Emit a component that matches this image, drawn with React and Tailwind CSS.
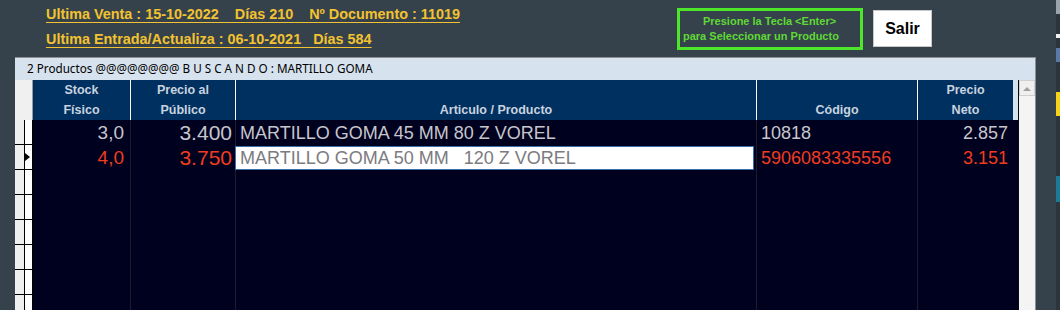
export default function App() {
  const cols = "grid grid-cols-[18px_97px_105px_521px_161px_96px]";
  const emptyRows = Array.from({ length: 6 });

  return (
    <div className="relative h-[310px] w-[1060px] overflow-hidden bg-[#36424b] font-['Liberation_Sans',Arial,sans-serif]">
      {/* pieces of the window behind, at the right edge */}
      <div className="absolute right-0 top-0 flex h-full w-[4px] flex-col bg-[#2c353c]">
        <div className="h-[14px] bg-[#9aa4ac]" />
        <div className="mt-[20px] h-[4px] bg-[#f0f0f0]" />
        <div className="mt-[10px] h-[14px] bg-[#5a78a8]" />
        <div className="mt-[30px] h-[24px] bg-[#f7d21a]" />
        <div className="mt-[60px] h-[26px] bg-[#1d7a96]" />
      </div>

      <div className="flex h-[57px] pr-[128px]">
        <div className="flex-1 pl-[46px] pt-[4px] text-[14.4px] font-bold leading-[20px] text-[#f2c230]">
          <div>
            <span className="underline underline-offset-[3px]">
              Ultima Venta : 15-10-2022&nbsp;&nbsp;&nbsp; Días 210&nbsp;&nbsp;&nbsp; Nº Documento : 11019
            </span>
          </div>
          <div className="mt-[5px]">
            <span className="underline underline-offset-[3px]">
              Ultima Entrada/Actualiza : 06-10-2021&nbsp;&nbsp; Días 584
            </span>
          </div>
        </div>
        <div className="mt-[8px] flex h-[42px] w-[186px] flex-col justify-center border-[3px] border-[#4ee62a] pl-[3px] text-[11px] font-bold leading-[15px] text-[#5ed935]">
          <div className="pl-[20px]">Presione la Tecla &lt;Enter&gt;</div>
          <div>para Seleccionar un Producto</div>
        </div>
        <button className="ml-[10px] mt-[10px] h-[37px] w-[59px] border border-[#c8c8c8] bg-white text-[16px] font-bold text-black">
          Salir
        </button>
      </div>

      <div className="ml-[15px] flex h-[253px] w-[1021px] flex-col border-t border-r border-[#8a9096]">
        <div className="flex h-[22px] items-center bg-[#d6e2ee] pl-[12px] text-[11.7px] text-black font-['Noto_Sans',sans-serif]">
          2 Productos @@@@@@@@ B U S C A N D O : MARTILLO GOMA
        </div>
        <div className="flex flex-1 overflow-hidden">
          <div className="flex w-[1003px] flex-col bg-[#0a0a10]">
            <div className={`${cols} h-[41px] bg-[#d6e2ee] text-[12.5px] font-bold leading-[20px] text-[#c9d3df]`}>
              <div className="h-full border-r border-[#9a9a9a] bg-[#f0f0f0]" />
              <div className="flex flex-col items-center justify-center bg-[#00305f]">
                <span>Stock</span>
                <span>Físico</span>
              </div>
              <div className="flex flex-col items-center justify-center border-l border-white bg-[#00305f]">
                <span>Precio al</span>
                <span>Público</span>
              </div>
              <div className="flex items-end justify-center border-l border-white bg-[#00305f]">
                <span>Articulo / Producto</span>
              </div>
              <div className="flex items-end justify-center border-l border-white bg-[#00305f]">
                <span>Código</span>
              </div>
              <div className="flex flex-col items-center justify-center border-l border-white bg-[#00305f]">
                <span>Precio</span>
                <span>Neto</span>
              </div>
            </div>

            <Row
              cols={cols}
              stock="3,0"
              precio="3.400"
              articulo="MARTILLO GOMA 45 MM 80 Z VOREL"
              codigo="10818"
              neto="2.857"
              text="text-[#c6c6cc]"
            />
            <Row
              cols={cols}
              current
              stock="4,0"
              precio="3.750"
              articulo="MARTILLO GOMA 50 MM   120 Z VOREL"
              codigo="5906083335556"
              neto="3.151"
              text="text-[#f23c1e]"
            />
            {emptyRows.map((_, i) => (
              <Row key={i} cols={cols} />
            ))}
          </div>

          <div className="flex w-[17px] flex-col border-l border-[#0a0a0a] bg-[#f4f4f4]">
            <div className="flex h-[16px] items-center justify-center border border-[#d0d0d0] bg-[#f0f0f0]">
              <svg width="8" height="5" viewBox="0 0 8 5">
                <path d="M0 5 L4 1 L8 5 Z" fill="#a0a0a0" />
              </svg>
            </div>
          </div>
        </div>
      </div>
    </div>
  );
}

function Row({ cols, current, stock, precio, articulo, codigo, neto, text }) {
  return (
    <div className={`${cols} h-[25px] shrink-0 bg-[#00001f] ${text ?? ""}`}>
      <div className="flex h-[25px] border-b border-r border-black bg-white">
        <div className="h-full w-[9px] bg-[#efefef]" />
        <div className="flex h-full flex-1 items-center border-l border-black bg-white">
          {current ? (
            <svg width="5" height="8" viewBox="0 0 5 8">
              <path d="M0 0 L5 4 L0 8 Z" fill="#000" />
            </svg>
          ) : null}
        </div>
      </div>
      <div className="flex items-center justify-end pr-[6px] text-[19px] leading-none">{stock}</div>
      <div className="flex items-center justify-end border-l border-[#1c1c2c] pr-[3px] text-[21px] leading-none">
        {precio}
      </div>
      <div className="flex items-center border-l border-[#1c1c2c]">
        {current ? (
          <div className="ml-[-1px] mr-[2px] flex h-[24px] w-full items-center border border-[#3c6fa8] bg-white pl-[4px] text-[18px] leading-none whitespace-pre text-[#7b7b80]">
            {articulo}
          </div>
        ) : (
          <span className="pl-[4px] text-[18px] leading-none whitespace-pre">{articulo}</span>
        )}
      </div>
      <div className="flex items-center border-l border-[#1c1c2c] pl-[4px] text-[18px] leading-none">{codigo}</div>
      <div className="flex items-center justify-end border-l border-[#1c1c2c] pr-[5px] text-[18px] leading-none">
        {neto}
      </div>
    </div>
  );
}
